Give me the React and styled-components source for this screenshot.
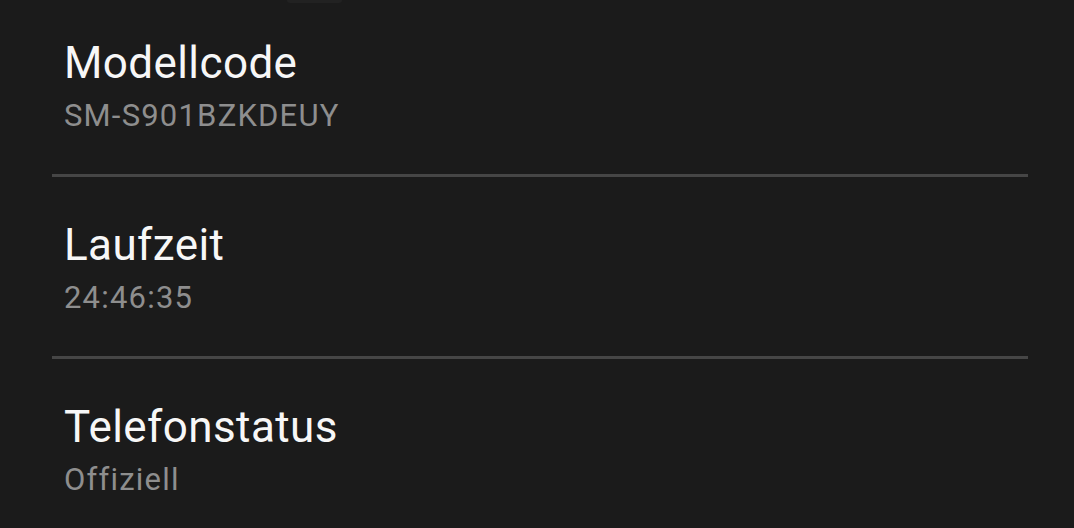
import styled, { createGlobalStyle } from 'styled-components'

const GlobalStyle = createGlobalStyle`
  html, body {
    margin: 0;
    padding: 0;
    background: #1b1b1b;
  }
  body {
    font-family: Roboto, "Noto Sans", "Liberation Sans", sans-serif;
    -webkit-font-smoothing: antialiased;
  }
`

const Screen = styled.div`
  width: 1074px;
  height: 528px;
  overflow: hidden;
  background: #1b1b1b;
  display: flex;
  flex-direction: column;
`

const Handle = styled.div`
  flex: none;
  width: 55px;
  height: 3px;
  margin-left: 287px;
  background: #222222;
  border-radius: 0 0 14px 14px;
`

const Item = styled.div`
  flex: none;
  padding: ${(p) => (p.$first ? '34px' : '42px')} 46px 38px 64px;
  display: flex;
  flex-direction: column;
  gap: 7px;
`

const Title = styled.div`
  font-size: 44px;
  line-height: 52px;
  letter-spacing: 0.4px;
  color: #f7f7f7;
`

const Value = styled.div`
  font-size: 31px;
  line-height: 40px;
  letter-spacing: 1.2px;
  color: #8e8e8e;
`

const Divider = styled.div`
  flex: none;
  height: 3px;
  margin: 0 46px 0 52px;
  background: #464646;
`

const rows = [
  { title: 'Modellcode', value: 'SM-S901BZKDEUY' },
  { title: 'Laufzeit', value: '24:46:35' },
  { title: 'Telefonstatus', value: 'Offiziell' },
]

const App = () => {
  return (
    <Screen>
      <GlobalStyle />
      <Handle />
      {rows.map((r, i) => (
        <div key={r.title}>
          {i > 0 && <Divider />}
          <Item $first={i === 0}>
            <Title>{r.title}</Title>
            <Value>{r.value}</Value>
          </Item>
        </div>
      ))}
    </Screen>
  )
}

export default App
